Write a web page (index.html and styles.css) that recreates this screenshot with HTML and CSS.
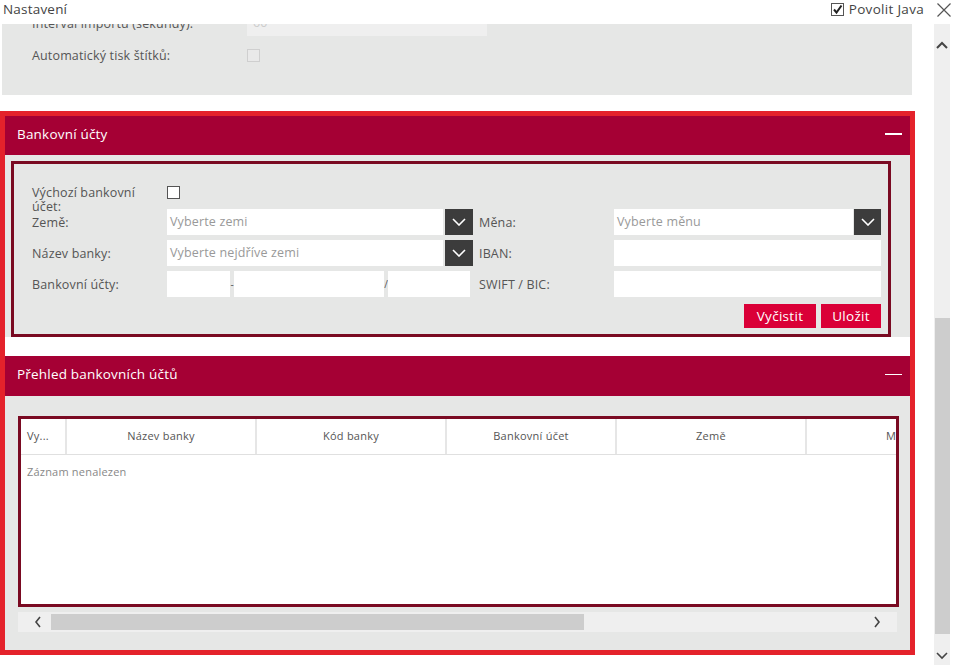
FILE: index.html
```html
<!DOCTYPE html>
<html lang="cs">
<head>
<meta charset="utf-8">
<title>Nastavení</title>
<link rel="stylesheet" href="styles.css">
</head>
<body>
<div class="titlebar">
  <span class="title">Nastavení</span>
  <div class="tb-right">
    <span class="java"><span class="cb-checked"><svg width="11" height="11" viewBox="0 0 11 11"><polyline points="2,5.5 4.5,8.5 9.5,1.5" fill="none" stroke="#222" stroke-width="2"/></svg></span>Povolit Java</span>
    <svg class="close" width="16" height="16" viewBox="0 0 16 16"><path d="M1.5 1.5 L14.5 14.5 M14.5 1.5 L1.5 14.5" stroke="#555" stroke-width="1.2" fill="none"/></svg>
  </div>
</div>
<div class="viewport">
  <div class="content">
    <section class="general">
      <div class="grow"><span class="glabel">Interval importu (sekundy):</span><span class="ginput">60</span></div>
      <div class="grow"><span class="glabel">Automatický tisk štítků:</span><span class="gcheck"></span></div>
    </section>
    <div class="redbox">
      <div class="phead"><span>Bankovní účty</span><span class="minus"></span></div>
      <div class="pbody form-body">
        <div class="form">
          <div class="grid">
            <span class="lbl lbl-top">Výchozí bankovní účet:</span>
            <span class="field-top"><span class="cb"></span></span>
            <span></span><span></span>

            <span class="lbl">Země:</span>
            <span class="select s-left"><span class="sinput ph">Vyberte zemi</span><span class="sbtn"><svg width="14" height="8" viewBox="0 0 14 8"><polyline points="1,1 7,7 13,1" fill="none" stroke="#fff" stroke-width="1.6"/></svg></span></span>
            <span class="lbl">Měna:</span>
            <span class="select s-right"><span class="sinput ph">Vyberte měnu</span><span class="sbtn"><svg width="14" height="8" viewBox="0 0 14 8"><polyline points="1,1 7,7 13,1" fill="none" stroke="#fff" stroke-width="1.6"/></svg></span></span>

            <span class="lbl">Název banky:</span>
            <span class="select s-left"><span class="sinput ph">Vyberte nejdříve zemi</span><span class="sbtn"><svg width="14" height="8" viewBox="0 0 14 8"><polyline points="1,1 7,7 13,1" fill="none" stroke="#fff" stroke-width="1.6"/></svg></span></span>
            <span class="lbl">IBAN:</span>
            <span class="input"></span>

            <span class="lbl">Bankovní účty:</span>
            <span class="acct"><span class="input a1"></span><span class="sep">-</span><span class="input a2"></span><span class="sep">/</span><span class="input a3"></span></span>
            <span class="lbl">SWIFT / BIC:</span>
            <span class="input"></span>
          </div>
          <div class="actions">
            <button class="btn">Vyčistit</button>
            <button class="btn">Uložit</button>
          </div>
        </div>
      </div>
      <div class="gap"></div>
      <div class="phead"><span>Přehled bankovních účtů</span><span class="minus"></span></div>
      <div class="pbody table-body">
        <div class="table">
          <div class="thead">
            <span class="th th-first">Vy...</span>
            <span class="th w190">Název banky</span>
            <span class="th w190">Kód banky</span>
            <span class="th w170">Bankovní účet</span>
            <span class="th w190">Země</span>
            <span class="th w190">Měna</span>
          </div>
          <div class="empty">Záznam nenalezen</div>
        </div>
        <div class="hscroll">
          <svg class="harr" width="8" height="12" viewBox="0 0 8 12"><polyline points="6,1 2,6 6,11" fill="none" stroke="#444" stroke-width="1.6"/></svg>
          <div class="htrack"><div class="hthumb"></div></div>
          <svg class="harr" width="8" height="12" viewBox="0 0 8 12"><polyline points="2,1 6,6 2,11" fill="none" stroke="#444" stroke-width="1.6"/></svg>
        </div>
      </div>
    </div>
  </div>
  <div class="vscroll">
    <svg class="varr" width="12" height="8" viewBox="0 0 12 8"><polyline points="1,7 6,2 11,7" fill="none" stroke="#444" stroke-width="2"/></svg>
    <div class="vtrack"><div class="vthumb"></div></div>
    <svg class="varr" width="12" height="8" viewBox="0 0 12 8"><polyline points="1,1 6,6 11,1" fill="none" stroke="#444" stroke-width="1.6"/></svg>
  </div>
</div>
</body>
</html>
```
FILE: styles.css
```css
* { box-sizing: border-box; }
html, body { margin: 0; padding: 0; background: #fff; }
body {
  width: 960px; height: 672px; overflow: hidden;
  font-family: "Open Sans", "DejaVu Sans", sans-serif;
  font-size: 12.5px; letter-spacing: 0.15px; color: #555;
}
.titlebar {
  position: relative; z-index: 2;
  height: 24px; background: #fff;
  display: flex; align-items: center; justify-content: space-between;
  padding: 0 8px 6px 3px;
}
.title { font-size: 13.5px; letter-spacing: 0.2px; color: #444; }
.tb-right { display: flex; align-items: center; gap: 12px; }
.java { display: flex; align-items: center; gap: 5px; color: #444; font-size: 13.5px; letter-spacing: 0.3px; }
.cb-checked {
  width: 13px; height: 13px; border: 1px solid #555; background: #fff;
  display: flex; align-items: center; justify-content: center;
}
.close { display: block; margin-top: 2px; }

.viewport { display: flex; height: 648px; }
.content { width: 934px; overflow: hidden; }

.general {
  margin: -24px 22px 0 2px;
  background: #e6e7e6;
  padding: 10px 0 27px 30px;
  display: flex; flex-direction: column; gap: 6px;
}
.grow { display: flex; align-items: center; height: 26px; }
.glabel { width: 215px; }
.ginput {
  width: 240px; height: 26px; background: #efefef; color: #ccc;
  padding-left: 6px; line-height: 26px;
}
.gcheck { width: 13px; height: 13px; border: 1px solid #cfcfcf; background: #e9e9e9; }

.redbox {
  margin-top: 16px;
  width: 915px;
  border: 5px solid #e4222b;
  background: #fff;
}
.phead {
  background: #a50034; color: #fff; font-size: 13.5px; letter-spacing: 0.2px;
  display: flex; align-items: center; justify-content: space-between;
  padding: 0 8px 4px 12px;
}
.phead:first-child { height: 39px; }
.minus { width: 17px; height: 1.5px; background: #fff; display: block; margin-top: 1px; }
.gap { height: 19px; }
.phead:nth-child(4) { height: 40px; }

.pbody { background: #e6e7e6; }
.form-body { padding: 6px 19px 0 6px; }
.form {
  border: 3px solid #7a0a22;
  padding: 20px 7px 6px 18px;
}
.grid {
  display: grid;
  grid-template-columns: 135px 312px 135px 267px;
  grid-template-rows: 20px 26px 26px 26px;
  row-gap: 5px;
}
.lbl { display: flex; align-items: center; }
.lbl-top { display: block; line-height: 14px; width: 115px; padding-top: 2px; }
.field-top { display: block; padding-top: 2px; }
.cb { display: block; width: 13px; height: 13px; border: 1px solid #555; background: #fff; }
.select { display: flex; gap: 2px; height: 26px; }
.s-left { width: 306px; }
.s-right { gap: 1px; }
.sinput {
  flex: 1; background: #fff; height: 26px; line-height: 26px; padding-left: 3px;
  white-space: nowrap; overflow: hidden;
}
.ph { color: #999; }
.sbtn {
  width: 28px; height: 26px; background: #3c3c3c;
  display: flex; align-items: center; justify-content: center;
}
.s-right .sbtn { width: 27px; }
.input { display: block; background: #fff; height: 26px; }
.acct { display: flex; align-items: center; width: 304px; }
.a1 { width: 63px; }
.a2 { width: 150px; }
.a3 { width: 82px; }
.sep { width: 4px; text-align: center; color: #555; font-size: 10px; letter-spacing: 0; }
.actions { display: flex; justify-content: flex-end; gap: 5px; margin-top: 7px; }
.btn {
  border: 0; background: #da0037; color: #fff;
  font-family: inherit; font-size: 13.5px; letter-spacing: 0.3px; height: 24px; padding: 0;
}
.btn:first-child { width: 72px; }
.btn:last-child { width: 60px; }

.table-body { padding: 20px 11px 18px 13px; }
.table {
  border: 3px solid #7a0a22; background: #fff;
  height: 191px; overflow: hidden;
}
.thead {
  display: flex; height: 36px; border-bottom: 1px solid #e0e0e0;
  width: max-content;
}
.th {
  flex: none; display: flex; align-items: center; justify-content: center;
  padding-bottom: 3px;
  border-right: 2px solid #e6e6e6; font-size: 11px; letter-spacing: 0.25px; color: #555;
}
.th-first { width: 46px; justify-content: flex-start; padding-left: 6px; }
.w190 { width: 190px; }
.w170 { width: 170px; }
.empty { padding: 9px 6px; font-size: 11px; letter-spacing: 0.2px; color: #888; }

.hscroll {
  margin-top: 5px; width: 879px; height: 20px; background: #efefef;
  display: flex; align-items: center; padding: 0 16px 0 16px; gap: 9px;
}
.htrack { flex: 1; height: 16px; }
.hthumb { width: 533px; height: 16px; background: #cdcdcd; }
.harr { flex: none; }

.vscroll {
  width: 16px; height: 641px; background: #efefef;
  display: flex; flex-direction: column; align-items: center;
  padding: 17px 0 5px;
}
.vtrack { flex: 1; width: 15px; margin: 9px 0 8px 1px; position: relative; }
.vthumb { position: absolute; left: 0; right: 0; top: 260px; height: 316px; background: #cdcdcd; }
.varr { flex: none; }
```
